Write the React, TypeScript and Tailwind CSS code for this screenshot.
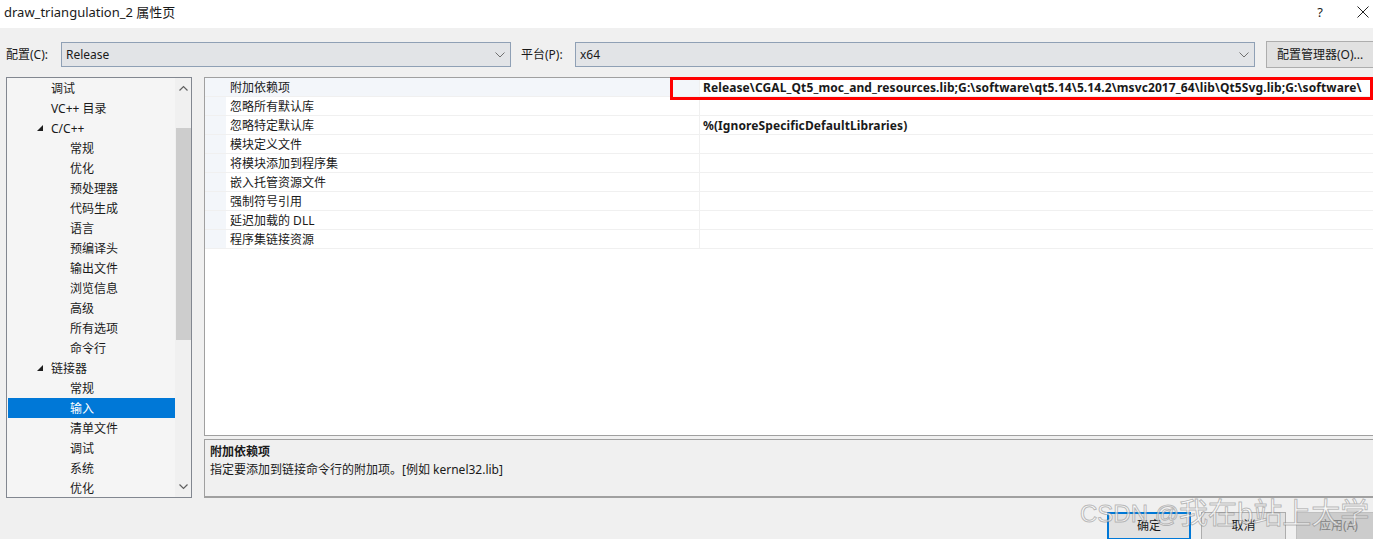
import React from 'react';

type TreeItem = { label: string; level: 1 | 2; expanded?: boolean; selected?: boolean };

const treeItems: TreeItem[] = [
    { label: '调试', level: 1 },
    { label: 'VC++ 目录', level: 1 },
    { label: 'C/C++', level: 1, expanded: true },
    { label: '常规', level: 2 },
    { label: '优化', level: 2 },
    { label: '预处理器', level: 2 },
    { label: '代码生成', level: 2 },
    { label: '语言', level: 2 },
    { label: '预编译头', level: 2 },
    { label: '输出文件', level: 2 },
    { label: '浏览信息', level: 2 },
    { label: '高级', level: 2 },
    { label: '所有选项', level: 2 },
    { label: '命令行', level: 2 },
    { label: '链接器', level: 1, expanded: true },
    { label: '常规', level: 2 },
    { label: '输入', level: 2, selected: true },
    { label: '清单文件', level: 2 },
    { label: '调试', level: 2 },
    { label: '系统', level: 2 },
    { label: '优化', level: 2 },
];

const props = [
    { name: '附加依赖项', value: 'Release\\CGAL_Qt5_moc_and_resources.lib;G:\\software\\qt5.14\\5.14.2\\msvc2017_64\\lib\\Qt5Svg.lib;G:\\software\\' },
    { name: '忽略所有默认库', value: '' },
    { name: '忽略特定默认库', value: '%(IgnoreSpecificDefaultLibraries)' },
    { name: '模块定义文件', value: '' },
    { name: '将模块添加到程序集', value: '' },
    { name: '嵌入托管资源文件', value: '' },
    { name: '强制符号引用', value: '' },
    { name: '延迟加载的 DLL', value: '' },
    { name: '程序集链接资源', value: '' },
];

const Chevron = ({ up = false }: { up?: boolean }) => (
    <svg width="9" height="6" viewBox="0 0 9 6" className={up ? 'rotate-180' : ''}>
        <polyline points="0.5,0.5 4.5,4.5 8.5,0.5" fill="none" stroke="#606060" strokeWidth="1.2" />
    </svg>
);

const Expander = () => (
    <svg width="6" height="6" viewBox="0 0 6 6">
        <polygon points="6,0 6,6 0,6" fill="#1e1e1e" />
    </svg>
);

const Select = ({ value, className }: { value: string; className: string }) => (
    <div className={`h-[25px] shrink-0 border border-[#8fa0b5] bg-[#e2e4e7] flex items-center pl-[4px] pr-[5px] ${className}`}>
        <span className="flex-1">{value}</span>
        <svg width="10" height="6" viewBox="0 0 10 6">
            <polyline points="0.5,0.5 5,5 9.5,0.5" fill="none" stroke="#707070" strokeWidth="1" />
        </svg>
    </div>
);

const App = () => {
    return (
        <div className="relative w-[1373px] h-[539px] overflow-hidden bg-[#f0f0f0] text-[12px] text-[#1a1a1a] font-['Noto_Sans','Noto_Sans_CJK_SC',sans-serif] leading-none">

            {/* Title bar */}
            <div className="h-[28px] bg-white flex items-center pl-[4px]">
                <span className="text-[13px] -mt-[4px]">draw_triangulation_2 属性页</span>
                <span className="ml-auto text-[13px] -mt-[4px] mr-[34px]">?</span>
                <svg width="12" height="12" viewBox="0 0 12 12" className="mr-[4px] -mt-[4px]">
                    <path d="M0.5 0.5 L11.5 11.5 M11.5 0.5 L0.5 11.5" stroke="#222" strokeWidth="1" />
                </svg>
            </div>

            {/* Configuration row */}
            <div className="flex items-center h-[27px] mt-[13px]">
                <span className="ml-[6px] w-[55px] shrink-0">配置(C):</span>
                <Select value="Release" className="w-[450px]" />
                <span className="ml-[10px] w-[54px] shrink-0">平台(P):</span>
                <Select value="x64" className="w-[680px]" />
                <button className="ml-[11px] h-[27px] w-[110px] shrink-0 border border-[#adadad] bg-[#e1e1e1] text-left pl-[10px] whitespace-nowrap">配置管理器(O)...</button>
            </div>

            {/* Main area */}
            <div className="flex mt-[9px] h-[421px]">
                {/* Tree */}
                <div className="ml-[6px] w-[186px] shrink-0 border border-[#828790] bg-[#f5f5f5] flex">
                    <div className="flex-1 pl-[1px] whitespace-nowrap">
                        {treeItems.map((item, i) => (
                            <div
                                key={i}
                                className={`h-[20px] flex items-center pt-[2px] ${item.selected ? 'bg-[#0078d7] text-white' : ''}`}
                            >
                                <span className={`${item.level === 1 ? 'w-[43px]' : 'w-[62px]'} shrink-0 flex justify-end pr-[8px] -mt-[2px]`}>
                                    {item.expanded && <Expander />}
                                </span>
                                {item.label}
                            </div>
                        ))}
                    </div>
                    <div className="w-[16px] shrink-0 bg-[#f0f0f0] flex flex-col items-center">
                        <div className="h-[20px] flex items-center justify-center">
                            <Chevron up />
                        </div>
                        <div className="w-[15px] h-[212px] mt-[30px] bg-[#cdcdcd]" />
                        <div className="mt-auto h-[20px] flex items-center justify-center">
                            <Chevron />
                        </div>
                    </div>
                </div>

                {/* Right column */}
                <div className="ml-[12px] flex-1 min-w-0 flex flex-col">
                    <div className="relative h-[360px] border-t border-l border-b border-[#a0a0a0] bg-white">
                        <div className="flex flex-col">
                            {props.map((p, i) => (
                                <div key={i} className="h-[19px] flex border-b border-[#f0f0f0]">
                                    <div className="w-[21px] shrink-0 bg-[#f3f6fa]" />
                                    <div className={`w-[474px] shrink-0 flex items-center pl-[4px] pt-[2px] border-r border-[#f0f0f0] ${i === 0 ? 'bg-[#f3f6fa]' : ''}`}>
                                        {p.name}
                                    </div>
                                    <div className="flex-1 min-w-0 flex items-center pl-[3px] pt-[2px] font-bold whitespace-nowrap overflow-hidden tracking-[0.1px]">
                                        {p.value}
                                    </div>
                                </div>
                            ))}
                        </div>
                        {/* Annotation box */}
                        <div className="absolute left-[465px] top-[-1px] w-[703px] h-[23px] border-[3px] border-[#ff0000]" />
                    </div>

                    {/* Description */}
                    <div className="mt-[3px] h-[59px] border-t border-l border-[#a0a0a0] border-b-2 border-b-[#a0a0a0] bg-[#f0f0f0] pl-[5px] pt-[6px]">
                        <div className="font-bold h-[18px]">附加依赖项</div>
                        <div>指定要添加到链接命令行的附加项。[例如 kernel32.lib]</div>
                    </div>
                </div>
            </div>

            {/* Buttons */}
            <div className="flex gap-[10px] pl-[1107px] mt-[14px]">
                <button className="h-[28px] w-[84px] shrink-0 border-2 border-[#0078d7] bg-[#e1e1e1]">确定</button>
                <button className="h-[28px] w-[85px] shrink-0 border border-[#adadad] bg-[#e1e1e1]">取消</button>
                <button className="h-[28px] w-[85px] shrink-0 border border-[#bfbfbf] bg-[#cccccc] text-[#838383]">应用(A)</button>
            </div>

            {/* Watermark */}
            <div className="absolute left-[1080px] top-[500px] flex items-end whitespace-nowrap text-[rgba(255,255,255,0.65)] [-webkit-text-stroke:1px_rgba(110,110,110,0.45)] font-['Liberation_Sans','Noto_Sans_CJK_SC',sans-serif]">
                <span className="text-[24px] mb-[3px]">CSDN @</span>
                <span className="text-[29px]">我在b站上大学</span>
            </div>
        </div>
    );
};

export default App;
